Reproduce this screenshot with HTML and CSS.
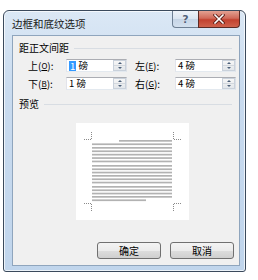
FILE: index.html
```html
<!DOCTYPE html>
<html lang="zh-CN">
<head>
    <meta charset="UTF-8">
    <title>边框和底纹选项</title>
    <link rel="stylesheet" href="styles.css">
</head>
<body>
    <div class="window">
        <div class="titlebar">
            <span class="title">边框和底纹选项</span>
            <div class="caption">
                <div class="cbtn help">?</div>
                <div class="cbtn close">
                    <svg width="12" height="10" viewBox="0 0 12 10">
                        <path d="M2 1 L10 9 M10 1 L2 9" stroke="#5a1d16" stroke-width="3.2" stroke-linecap="square"/>
                        <path d="M2 1 L10 9 M10 1 L2 9" stroke="#ffffff" stroke-width="1.6" stroke-linecap="square"/>
                    </svg>
                </div>
            </div>
        </div>

        <div class="client">
            <div class="group-head">距正文间距</div>
            <div class="spacing">
                <div class="row">
                    <span class="lbl">上(<u>O</u>):</span>
                    <div class="spinbox">
                        <span class="val"><span class="sel">1</span> 磅</span>
                        <span class="spin"><i class="up"></i><i class="down"></i></span>
                    </div>
                    <span class="lbl second">左(<u>E</u>):</span>
                    <div class="spinbox">
                        <span class="val">4 磅</span>
                        <span class="spin"><i class="up"></i><i class="down"></i></span>
                    </div>
                </div>
                <div class="row">
                    <span class="lbl">下(<u>B</u>):</span>
                    <div class="spinbox">
                        <span class="val">1 磅</span>
                        <span class="spin"><i class="up"></i><i class="down"></i></span>
                    </div>
                    <span class="lbl second">右(<u>G</u>):</span>
                    <div class="spinbox">
                        <span class="val">4 磅</span>
                        <span class="spin"><i class="up"></i><i class="down"></i></span>
                    </div>
                </div>
            </div>

            <div class="group-head preview-head">预览</div>
            <svg class="preview" width="113" height="97" viewBox="0 0 113 97">
                <rect width="113" height="97" fill="#ffffff"/>
                <g fill="#b2b2b2">
                    <rect x="43" y="17" width="53" height="1.7"/>
                    <rect x="16" y="20.4" width="80" height="1.7"/>
                    <rect x="16" y="24" width="80" height="1.7"/>
                    <rect x="16" y="27.4" width="80" height="1.7"/>
                    <rect x="16" y="30.8" width="80" height="1.7"/>
                    <rect x="16" y="34.2" width="80" height="1.7"/>
                    <rect x="16" y="37.6" width="80" height="1.7"/>
                    <rect x="16" y="42" width="80" height="1.7"/>
                    <rect x="16" y="45.4" width="80" height="1.7"/>
                    <rect x="16" y="48.7" width="80" height="1.7"/>
                    <rect x="16" y="52" width="80" height="1.7"/>
                    <rect x="16" y="55.4" width="80" height="1.7"/>
                    <rect x="16" y="58.7" width="80" height="1.7"/>
                    <rect x="16" y="63" width="80" height="1.7"/>
                    <rect x="16" y="66.4" width="80" height="1.7"/>
                    <rect x="16" y="69.7" width="80" height="1.7"/>
                    <rect x="16" y="73" width="80" height="1.7"/>
                    <rect x="16" y="76.4" width="54" height="1.7"/>
                </g>
                <g stroke="#8a8a8a" stroke-width="1" stroke-dasharray="1 1" fill="none">
                    <path d="M15.5 9 V16.5 H8"/>
                    <path d="M97.5 9 V16.5 H105"/>
                    <path d="M8 80.5 H15.5 V88"/>
                    <path d="M105 80.5 H97.5 V88"/>
                </g>
            </svg>

            <div class="buttons">
                <button>确定</button>
                <button>取消</button>
            </div>
        </div>
    </div>
</body>
</html>
```

FILE: styles.css
```css
body {
    margin: 0;
    background-color: #ffffff;
    font-family: "Noto Sans CJK SC", sans-serif;
    font-size: 10px;
    color: #000;
}
.window {
    margin: 10px 0 0 3px;
    width: 243px;
    height: 262px;
    box-sizing: border-box;
    border: 1px solid #3b4a5c;
    border-radius: 6px 6px 3px 3px;
    background: linear-gradient(180deg, #dbe8f5 0%, #c9dbef 30%, #c0d5ec 100%);
    box-shadow: inset 0 0 0 1px rgba(255, 255, 255, 0.7);
    padding: 0 5px 5px 8px;
    display: flex;
    flex-direction: column;
}
.titlebar {
    height: 24px;
    display: flex;
    align-items: center;
}
.title {
    font-size: 10.5px;
    line-height: 1;
    color: #1a1a1a;
    padding-top: 2px;
}
.caption {
    margin-left: auto;
    align-self: flex-start;
    display: flex;
}
.cbtn {
    height: 17px;
    box-sizing: border-box;
    display: flex;
    align-items: center;
    justify-content: center;
}
.help {
    width: 26px;
    border: 1px solid #6e7f93;
    border-top: none;
    border-right: none;
    border-radius: 0 0 0 4px;
    background: linear-gradient(180deg, #eef3f9 0%, #dae5f1 50%, #c6d5e6 51%, #d3e0ee 100%);
    color: #52627a;
    font-family: "DejaVu Sans", sans-serif;
    font-size: 11px;
    font-weight: bold;
    text-shadow: 0 0 1px #fff;
}
.close {
    width: 42px;
    border: 1px solid #5c2a24;
    border-top: none;
    border-radius: 0 0 4px 0;
    background: linear-gradient(180deg, #e3a192 0%, #d06a5a 45%, #c2412f 55%, #cf624c 100%);
}
.client {
    flex: 1;
    border: 1px solid #8fa5bd;
    background-color: #f0f0f0;
    padding: 0 5px 6px 3px;
    display: flex;
    flex-direction: column;
}
.group-head {
    margin-top: 5px;
    height: 14px;
    padding-left: 3px;
    display: flex;
    align-items: center;
    line-height: 1;
}
.group-head::after {
    content: "";
    flex: 1;
    height: 1px;
    margin: 0 2px 0 5px;
    background-color: #d8dde3;
}
.spacing {
    margin-top: 4px;
    padding-left: 12px;
    display: flex;
    flex-direction: column;
    gap: 5px;
}
.row {
    display: flex;
    height: 13px;
}
.lbl {
    flex: none;
    width: 38px;
    display: flex;
    align-items: center;
    line-height: 1;
    white-space: nowrap;
}
.lbl.second {
    width: 40px;
    margin-left: 8px;
}
.lbl u {
    font-size: 8px;
}
.spinbox {
    flex: none;
    width: 61px;
    box-sizing: border-box;
    display: flex;
    border: 1px solid #abadb3;
    border-color: #abadb3 #dbdfe6 #e3e9ef #e2e3ea;
    background-color: #fff;
}
.val {
    flex: 1;
    min-width: 0;
    padding-left: 2px;
    display: flex;
    align-items: center;
    line-height: 1;
    font-size: 9.5px;
    white-space: pre;
}
.sel {
    display: inline-block;
    height: 10px;
    line-height: 10px;
    padding: 0 1px;
    background-color: #3399ff;
    color: #fff;
}
.spin {
    flex: none;
    width: 13px;
    box-sizing: border-box;
    display: flex;
    flex-direction: column;
    border: 1px solid #c9d1db;
    background: linear-gradient(180deg, #f6f6f6, #e2e6ea);
}
.spin i {
    flex: 1;
    display: flex;
    align-items: center;
    justify-content: center;
}
.spin .up {
    border-bottom: 1px solid #d3d8de;
}
.spin .up::before,
.spin .down::before {
    content: "";
    border-left: 2px solid transparent;
    border-right: 2px solid transparent;
}
.spin .up::before {
    border-bottom: 2px solid #4c607a;
}
.spin .down::before {
    border-top: 2px solid #4c607a;
}
.preview-head {
    margin-top: 7px;
}
.preview {
    display: block;
    margin: 12px 0 0 60px;
}
.buttons {
    margin-top: auto;
    display: flex;
    justify-content: flex-end;
    gap: 9px;
}
button {
    width: 64px;
    height: 17px;
    padding: 0;
    border: 1px solid #707070;
    border-radius: 3px;
    background: linear-gradient(180deg, #f3f3f3 0%, #ebebeb 50%, #dddddd 51%, #cfcfcf 100%);
    font-family: "Noto Sans CJK SC", sans-serif;
    font-size: 10px;
    line-height: 1;
    color: #000;
}
```
